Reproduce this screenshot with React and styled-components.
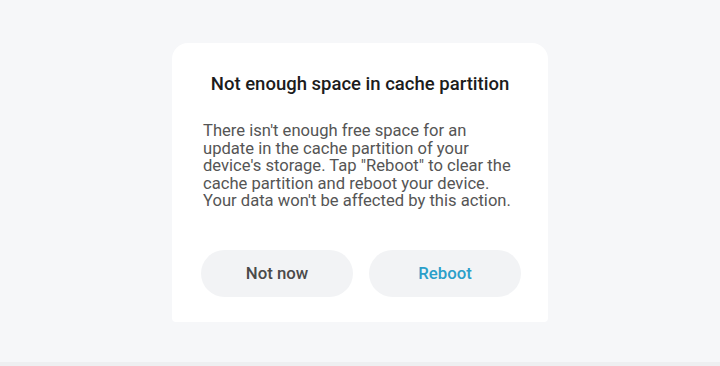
import React from "react";
import styled, { createGlobalStyle } from "styled-components";

const GlobalStyle = createGlobalStyle`
  html, body {
    margin: 0;
    padding: 0;
  }
  body {
    background: #f6f7f9;
    font-family: Roboto, "Liberation Sans", sans-serif;
  }
`;

const Page = styled.div`
  width: 720px;
  height: 366px;
  box-sizing: border-box;
  display: flex;
  justify-content: center;
  align-items: flex-start;
  padding-top: 43px;
  background: #f6f7f9;
  border-bottom: 4px solid #eeeff1;
`;

const Card = styled.div`
  width: 376px;
  height: 279px;
  box-sizing: border-box;
  background: #ffffff;
  border-radius: 16px 16px 4px 4px;
  padding: 30px 20px 0 31px;
  display: flex;
  flex-direction: column;
`;

const Title = styled.h2`
  margin: 0 0 0 -11px;
  text-align: center;
  font-size: 18.5px;
  font-weight: 500;
  color: #1c1c1c;
  line-height: 22px;
  white-space: nowrap;
`;

const Body = styled.p`
  margin: 27px 0 0;
  font-size: 16.6px;
  line-height: 17.5px;
  color: #555555;
  white-space: nowrap;
`;

const Actions = styled.div`
  display: flex;
  gap: 16px;
  margin-top: 40px;
  margin-left: -2px;
`;

const Button = styled.button`
  width: 152px;
  height: 47px;
  border: none;
  border-radius: 24px;
  background: #f2f3f5;
  font-family: Roboto, "Liberation Sans", sans-serif;
  font-size: 16.8px;
  font-weight: 500;
  color: ${(p) => (p.$primary ? "#2b9fc9" : "#4a4a4a")};
  cursor: pointer;
`;

export default function App() {
  return (
    <>
      <GlobalStyle />
      <Page>
        <Card>
          <Title>Not enough space in cache partition</Title>
          <Body>
            There isn't enough free space for an
            <br />
            update in the cache partition of your
            <br />
            device's storage. Tap "Reboot" to clear the
            <br />
            cache partition and reboot your device.
            <br />
            Your data won't be affected by this action.
          </Body>
          <Actions>
            <Button>Not now</Button>
            <Button $primary>Reboot</Button>
          </Actions>
        </Card>
      </Page>
    </>
  );
}
